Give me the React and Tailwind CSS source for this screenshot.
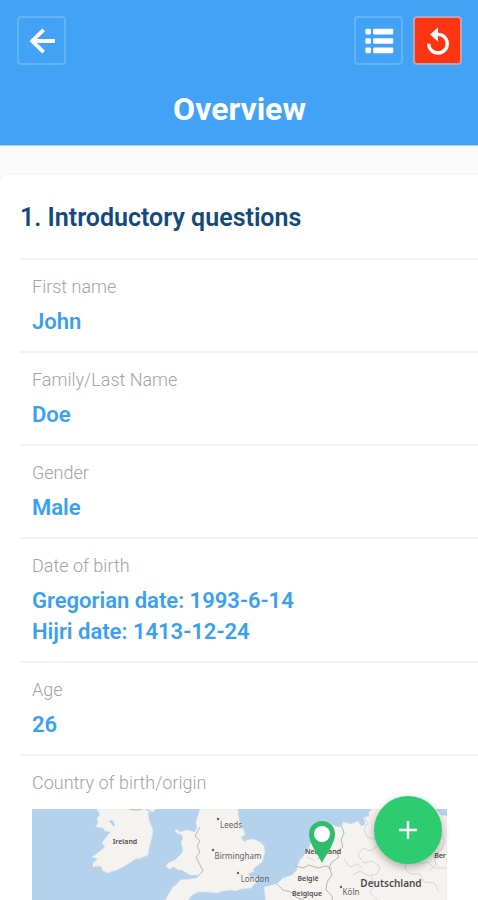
import React from "react";

const answers = [
  { label: "First name", values: ["John"] },
  { label: "Family/Last Name", values: ["Doe"] },
  { label: "Gender", values: ["Male"] },
  {
    label: "Date of birth",
    values: ["Gregorian date: 1993-6-14", "Hijri date: 1413-12-24"],
  },
  { label: "Age", values: ["26"] },
];

const places = [
  { name: "Leeds", x: 199, y: 19, dot: [186, 10] },
  { name: "Birmingham", x: 206, y: 50, dot: [181, 41] },
  { name: "London", x: 223, y: 73, dot: [206, 64] },
  { name: "Köln", x: 319, y: 86, dot: [309, 78] },
];

const countries = [
  { name: "Ireland", x: 93, y: 35 },
  { name: "Nederland", x: 291, y: 45 },
  { name: "België", x: 276, y: 72 },
  { name: "Belgique", x: 275, y: 87 },
];

const ArrowIcon = () => (
  <svg width="26" height="26" viewBox="0 0 26 26" fill="none" stroke="white" strokeWidth="3.8">
    <path d="M26 13H3.2M14.6 1.8L3.2 13l11.4 11.2" />
  </svg>
);

const ListIcon = () => (
  <svg width="30" height="26" viewBox="0 0 30 26" fill="white">
    <rect x="1.4" y="0.8" width="5.6" height="5.6" rx="1.4" />
    <rect x="9.2" y="0.8" width="20" height="5.6" rx="1" />
    <rect x="1.4" y="10.2" width="5.6" height="5.6" rx="1.4" />
    <rect x="9.2" y="10.2" width="20" height="5.6" rx="1" />
    <rect x="1.4" y="19.6" width="5.6" height="5.6" rx="1.4" />
    <rect x="9.2" y="19.6" width="20" height="5.6" rx="1" />
  </svg>
);

const ResetIcon = () => (
  <svg width="34" height="34" viewBox="0 0 34 34">
    <path d="M16 10.4h1a9.3 9.3 0 1 1-9.3 9.3" fill="none" stroke="white" strokeWidth="3.4" />
    <path d="M9 10.6L17 3.6v14z" fill="white" />
  </svg>
);

const OriginMap = () => (
  <svg
    viewBox="0 0 415 200"
    preserveAspectRatio="xMinYMin slice"
    className="block w-full bg-[#b5d2ed] font-['Noto_Sans',sans-serif]"
    role="img"
    aria-label="Country of birth/origin"
  >
    {/* Ireland, Great Britain, mainland */}
    <g fill="#f5f3f0" stroke="#e2e4e6" strokeWidth="0.6" strokeLinejoin="round">
      <path d="M65 0L68 6 65 9 66 13 64 18 71 19 73 22 79 23 76 26 70 34 73 38 66 44 60 48 66 50 61 54 61 58 66 57 70 58 70 61 75 64 85 61 96 55 103 50 109 49 116 46 117 39 120 28 121 21 117 11 116 4 122 2 124 0z" />
      <path d="M168 0L164 13 165 19 163 23 155 21 148 23 144 20 143 22 145 24 150 26 151 29 149 33 151 41 150 44 143 51 136 54 134 57 137 60 142 58 146 61 150 61 158 66 165 66 165 69 158 70 148 71 144 76 141 78 136 86 133 91 125 98 132 102 145 100 152 96 157 90 160 86 166 83 176 83 185 84 191 82 200 81 203 82 210 80 219 79 226 71 226 68 218 68 216 65 222 62 221 60 230 53 233 43 232 37 228 33 221 30 215 31 212 33 209 28 213 26 212 22 208 14 206 6 206 0z" />
      <path d="M232 78L245 75 251 69 260 66 265 61 265 58 268 51 275 43 278 36 280 31 288 24 295 21 301 16 306 18 310 18 311 13 319 15 326 12 329 17 333 16 333 12 331 9 337 7 337 3 341 0H415V200H205L210 160 200 130 225 112 234 95z" />
    </g>
    <path d="M404 0h11v7l-6-1zM77 12l3-1 3 4-1 3zM282 32l5-6 3 4-5 8z" fill="#b5d2ed" />
    <g fill="none" stroke="#b9b5b8" strokeWidth="1" strokeLinejoin="round">
      <path d="M168 18L163 27 168 32 165 37 168 43 164 48 167 54 171 62 165 68" />
      <path d="M97 0l5 1 5 0 3-1m4 0l5 3" />
      <path d="M310 18L312 24 309 31 311 38 304 43 307 48 300 53 297 58 300 66 295 73" />
      <path d="M263 57l8 2 6-3 9 3 8-2 6 3M245 75l6 6 8 2 6 6 8 2M295 73l-1 8 6 6 1 8" />
    </g>
    <g fill="none" stroke="#d3cdd1" strokeWidth="0.8" strokeLinejoin="round">
      <path d="M332 8l4 6-4 6 3 8 8 2 3 7-8 5-7-3-5 7 6 8 9-2 7 6-3 7-9 2-8-5-7 4" />
      <path d="M343 30l9 6 5 9 11 6 8-4 12 8 8-2 6 6 13 0M376 48l-3 11 5 6 10 0 4 8 10 1 5 9" />
      <path d="M339 66l4 10-5 7 7 8M312 50l6 8 8-3 5 5M397 62l7-6-2-9 7-6 4-9-4-7" />
      <path d="M285 50l8-3 6-9M275 48l8 4" />
    </g>
    <g textAnchor="middle" fontSize="8" fill="#626266">
      {places.map((p) => (
        <g key={p.name}>
          <circle cx={p.dot[0]} cy={p.dot[1]} r="1.2" />
          <text x={p.x} y={p.y}>{p.name}</text>
        </g>
      ))}
    </g>
    <g textAnchor="middle" fontSize="7" fontWeight="600" fill="#4b4b50">
      {countries.map((c) => (
        <text key={c.name} x={c.x} y={c.y}>{c.name}</text>
      ))}
      <text x="359" y="78" fontSize="10">Deutschland</text>
      <text x="408" y="49">Ber</text>
    </g>
    <path
      d="M290 12a13 13 0 0 0-13 13c0 9 8 19 13 29 5-10 13-20 13-29a13 13 0 0 0-13-13z"
      fill="#2dbd6c"
    />
    <circle cx="290" cy="25" r="8" fill="white" />
  </svg>
);

const HeaderButton = ({ label, className, children }) => (
  <button
    type="button"
    aria-label={label}
    className={`flex size-[49px] items-center justify-center rounded border-2 ${className}`}
  >
    {children}
  </button>
);

const App = () => {
  return (
    <div className="relative flex h-screen flex-col bg-[#fafafa] font-[Roboto,sans-serif]">
      <header className="shrink-0 border-b border-[#a9d0f7] bg-[#42a3f6] pt-4 pr-4 pb-4 pl-[17px]">
        <div className="flex items-center justify-between">
          <HeaderButton label="Back" className="border-[#63b3f8]">
            <ArrowIcon />
          </HeaderButton>
          <div className="flex gap-[10px]">
            <HeaderButton label="Sections" className="border-[#63b3f8]">
              <ListIcon />
            </HeaderButton>
            <HeaderButton label="Start over" className="border-[#b6a5b4] bg-[#fd3412]">
              <ResetIcon />
            </HeaderButton>
          </div>
        </div>
        <h1 className="mt-6 text-center text-[32px] leading-10 font-bold text-white">Overview</h1>
      </header>

      <main className="min-h-0 flex-1 overflow-y-auto pt-7 [scrollbar-width:none]">
        <section className="rounded-l-lg border-t border-[#f5f5f5] bg-white pl-5">
          <h2 className="pt-[27px] pb-6 text-[25px] leading-8 font-semibold text-[#124a7b]">
            1. Introductory questions
          </h2>
          <dl>
            {answers.map((a) => (
              <div key={a.label} className="border-t-2 border-[#f3f3f3] px-3 pt-[15px] pb-[14px]">
                <dt className="text-[18px] leading-6 font-light text-[#a3a3a3]">{a.label}</dt>
                <dd className="mt-[7px] text-[22px] leading-[31px] font-semibold text-[#3a9ff2]">
                  {a.values.map((v) => (
                    <p key={v}>{v}</p>
                  ))}
                </dd>
              </div>
            ))}
            <div className="border-t-2 border-[#f3f3f3] pt-[15px] pr-[31px] pb-[14px] pl-3">
              <dt className="text-[18px] leading-6 font-light text-[#a3a3a3]">
                Country of birth/origin
              </dt>
              <dd className="mt-[14px]">
                <OriginMap />
              </dd>
            </div>
          </dl>
        </section>
      </main>

      <button
        type="button"
        aria-label="Add"
        className="absolute right-9 bottom-9 flex size-[68px] items-center justify-center rounded-full bg-[#2ecc71] shadow-[0_3px_8px_rgba(0,0,0,0.3)]"
      >
        <svg width="20" height="20" viewBox="0 0 20 20" stroke="white" strokeWidth="2.4">
          <path d="M10 1v18M1 10h18" />
        </svg>
      </button>
    </div>
  );
};

export default App;
